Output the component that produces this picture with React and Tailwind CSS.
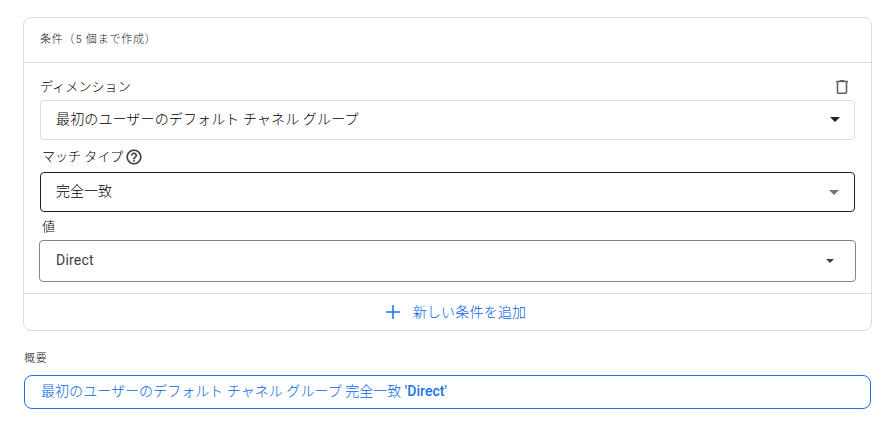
import React from 'react'

const Caret = ({ className }) => (
  <svg viewBox="0 0 10 5" className={className} fill="currentColor">
    <path d="M0 0h10L5 5z" />
  </svg>
)

const TrashIcon = () => (
  <svg viewBox="0 0 12 14" className="mt-[17px] mr-[7px] h-[14px] w-3 text-[#5f6368]" fill="none" stroke="currentColor">
    <path d="M0 1.5h12" strokeWidth="1.4" />
    <path d="M3.5 .5h5" strokeWidth="1" />
    <path d="M1.5 2v10.2c0 .6.4 1.05 1 1.05h7c.6 0 1-.45 1-1.05V2" strokeWidth="1.6" />
  </svg>
)

const HelpIcon = () => (
  <svg viewBox="0 0 24 24" className="mb-[2px] ml-[2px] h-[18px] w-[18px] text-[#3c4043]" fill="currentColor" stroke="currentColor" strokeWidth="0.2">
    <path d="M11 18h2v-2h-2v2zm1-16C6.48 2 2 6.48 2 12s4.48 10 10 10 10-4.48 10-10S17.52 2 12 2zm0 18c-4.41 0-8-3.59-8-8s3.59-8 8-8 8 3.59 8 8-3.59 8-8 8zm0-14c-2.21 0-4 1.79-4 4h2c0-1.1.9-2 2-2s2 .9 2 2c0 2-3 1.75-3 5h2c0-2.25 3-2.5 3-5 0-2.21-1.79-4-4-4z" />
  </svg>
)

const App = () => {
  return (
    <div className="h-[434px] w-[891px] overflow-hidden bg-white pt-[17px] pl-[23px] font-[Roboto,'Noto_Sans_CJK_JP',sans-serif] text-sm text-[#3c4043]">
      {/* 条件カード */}
      <section className="flex h-[314px] w-[849px] flex-col rounded-lg border border-[#dadce0]">
        <header className="flex h-[45px] items-center border-b border-[#dadce0] pl-4 text-[11px] font-light tracking-[0.8px] text-[#202124]">
          <p>
            条件（<span className="font-normal text-[#5f6368]">5</span> 個まで作成）
          </p>
        </header>

        <div className="flex h-[230px] flex-col px-4">
          <div className="flex h-[37px] justify-between">
            <span className="mt-[14px] text-[13px] leading-5 font-light tracking-[0.1px] text-black">ディメンション</span>
            <TrashIcon />
          </div>
          <button className="flex h-10 shrink-0 items-center justify-between rounded border border-[#dadce0] pr-[14px] pb-[2px] pl-[15px] font-light tracking-[0.13px] text-black">
            最初のユーザーのデフォルト チャネル グループ
            <Caret className="mt-px h-[5px] w-[10px] text-[#202124]" />
          </button>

          <div className="flex h-8 items-center pt-[3px] pl-[2px] text-[13px] font-light text-black">
            マッチ タイプ
            <HelpIcon />
          </div>
          <button className="flex h-10 shrink-0 items-center justify-between rounded border border-[#202124] pr-[15px] pb-[2px] pl-[15px] font-light text-black">
            完全一致
            <Caret className="mt-[2px] h-[5px] w-[10px] text-[#757575]" />
          </button>

          <div className="flex h-7 items-center pt-[2px] pl-[2px] text-[13px] font-light text-black">値</div>
          <button className="-mx-px flex h-[42px] shrink-0 items-center justify-between rounded border border-[#80868b] pr-[21px] pb-[2px] pl-4 tracking-[0.2px]">
            Direct
            <Caret className="mt-[2px] h-1 w-2 text-[#3c4043]" />
          </button>
        </div>

        <button className="flex flex-1 items-center justify-center gap-[13px] border-t border-[#dadce0] pl-[17px] font-light tracking-[0.2px] text-[#0062e6]">
          <svg viewBox="0 0 14 14" className="h-[14px] w-[14px] text-[#1a73e8]" stroke="currentColor" strokeWidth="1.5">
            <path d="M7 0v14M0 7h14" />
          </svg>
          新しい条件を追加
        </button>
      </section>

      {/* 概要 */}
      <h2 className="mt-[19px] ml-px text-[11px] leading-[18px] font-light tracking-[0.8px] text-[#202124]">概要</h2>
      <div className="mt-[7px] ml-px flex h-[34px] w-[847px] items-center rounded-lg border border-[#1a73e8] pb-[2px] pl-4 font-light text-[#0062e6]">
        <p className="tracking-[0.05px]">
          最初のユーザーのデフォルト チャネル グループ 完全一致 <span className="font-medium text-[#1a73e8]">'Direct'</span>
        </p>
      </div>
    </div>
  )
}

export default App
